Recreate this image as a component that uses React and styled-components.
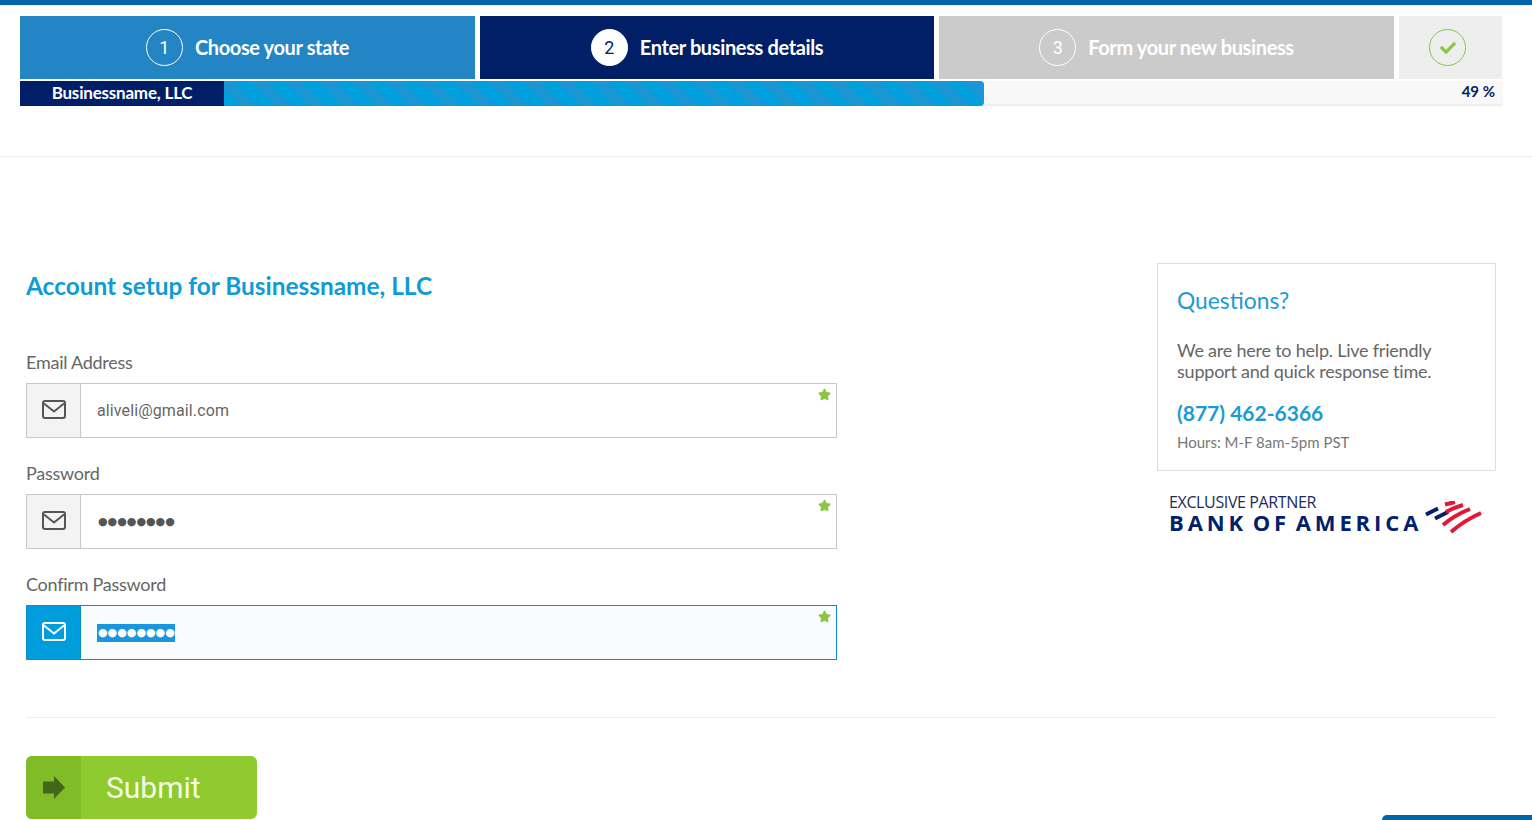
import React from 'react';
import styled, { createGlobalStyle } from 'styled-components';
import { FaStar, FaCheck } from 'react-icons/fa';

const GlobalStyle = createGlobalStyle`
    html, body {
        margin: 0;
        padding: 0;
        background: #fff;
        overflow: hidden;
    }
    body {
        font-family: Lato, "Liberation Sans", sans-serif;
        color: #555;
    }
`;

const Page = styled.div`
    height: 820px;
    border-top: 5px solid #0066a8;
    box-sizing: border-box;
    position: relative;
    overflow: hidden;
`;

const Header = styled.header`
    height: 152px;
    box-sizing: border-box;
    padding: 11px 29px 0 20px;
    border-bottom: 1px solid #eee;
`;

const Steps = styled.div`
    display: grid;
    grid-template-columns: 455px 454px 455px 103px;
    gap: 5px;
`;

const Step = styled.div`
    height: 63px;
    display: flex;
    align-items: center;
    justify-content: center;
    gap: 12px;
    background: ${p => p.$bg};
    color: #fff;
    font-weight: 700;
    font-size: 20px;
    letter-spacing: -0.37px;
`;

const StepLabel = styled.span`
    margin-top: -2px;
`;

const StepNumber = styled.span`
    width: 37px;
    height: 37px;
    box-sizing: border-box;
    border-radius: 50%;
    border: 1px solid #fff;
    display: flex;
    align-items: center;
    justify-content: center;
    background: ${p => (p.$filled ? '#fff' : 'transparent')};
    color: ${p => (p.$filled ? '#001f66' : '#fff')};
    font-family: Roboto, sans-serif;
    font-weight: 400;
    font-size: 18px;
    letter-spacing: 0;
`;

const DoneCircle = styled.span`
    width: 37px;
    height: 37px;
    box-sizing: border-box;
    margin-right: 6px;
    border-radius: 50%;
    border: 1px solid #8cc63f;
    display: flex;
    align-items: center;
    justify-content: center;
    color: #8cc63f;
    font-size: 16px;
`;

const Progress = styled.div`
    margin-top: 2px;
    height: 25px;
    width: 1483px;
    display: flex;
    background: #f8f8f8;
    border-bottom: 2px solid #eee;
    box-sizing: border-box;
    border-radius: 0 3px 3px 0;
`;

const ProgressLabel = styled.div`
    width: 204px;
    height: 25px;
    padding-bottom: 2px;
    box-sizing: border-box;
    background: #001f66;
    color: #fff;
    font-weight: 700;
    font-size: 17px;
    letter-spacing: -0.2px;
    display: flex;
    align-items: center;
    justify-content: center;
`;

const ProgressFill = styled.div`
    height: 25px;
    border-radius: 0 4px 4px 0;
    background: repeating-linear-gradient(45deg, #00a0de 0 12px, #1a96d3 12px 24px);
`;

const Percent = styled.span`
    margin-left: auto;
    margin-right: 8px;
    line-height: 21px;
    font-weight: 700;
    font-size: 15px;
    color: #001f66;
`;

const Main = styled.main`
    padding: 106px 36px 0 26px;
`;

const Columns = styled.div`
    display: flex;
    justify-content: space-between;
    align-items: flex-start;
`;

const FormColumn = styled.section`
    width: 811px;
`;

const Title = styled.h1`
    margin: 7px 0 0;
    height: 32px;
    line-height: 31px;
    font-weight: 700;
    font-size: 24.4px;
    color: #0f9bd7;
`;

const Field = styled.div`
    margin-top: ${p => (p.$first ? '50px' : '25px')};
`;

const Label = styled.div`
    height: 31px;
    line-height: 20px;
    font-size: 18px;
    letter-spacing: -0.25px;
    color: #666;
`;

const InputBox = styled.div`
    height: 55px;
    box-sizing: border-box;
    display: flex;
    position: relative;
    border: 1px solid ${p => (p.$focus ? '#0a8fc4' : '#c8c8c8')};
    background: ${p => (p.$focus ? '#f9fcff' : '#fff')};
`;

const IconCell = styled.div`
    width: 54px;
    flex: none;
    margin-right: 16px;
    display: flex;
    align-items: center;
    justify-content: center;
    box-sizing: border-box;
    border-right: 1px solid ${p => (p.$focus ? '#0a8fc4' : '#c8c8c8')};
    background: ${p => (p.$focus ? '#009ddc' : '#f3f3f3')};
    color: ${p => (p.$focus ? '#fff' : '#555')};
`;

const InputText = styled.div`
    display: flex;
    align-items: center;
    font-family: Roboto, sans-serif;
    font-size: 16px;
    letter-spacing: 0.12px;
    color: #666;
`;

const Dots = styled.span`
    height: 18px;
    line-height: 18px;
    padding: 0 0 0 1px;
    font-family: "DejaVu Sans", sans-serif;
    font-size: 11px;
    letter-spacing: 0;
    color: ${p => (p.$selected ? '#fff' : '#555')};
    background: ${p => (p.$selected ? '#1a96dc' : 'transparent')};
`;

const Required = styled.span`
    position: absolute;
    top: 4px;
    right: 5px;
    color: #8cc63f;
    font-size: 13px;
    line-height: 13px;
`;

const Aside = styled.aside`
    width: 339px;
`;

const HelpCard = styled.div`
    height: 208px;
    box-sizing: border-box;
    border: 1px solid #ddd;
    padding: 22px 19px 0;
`;

const HelpTitle = styled.h2`
    margin: 0;
    font-weight: 400;
    font-size: 22.8px;
    line-height: 28px;
    color: #1c9bd2;
`;

const HelpText = styled.p`
    margin: 26px 0 0;
    font-size: 18px;
    line-height: 21px;
    letter-spacing: -0.22px;
    color: #666;
`;

const Phone = styled.div`
    margin-top: 18px;
    font-size: 21px;
    line-height: 26px;
    font-weight: 700;
    color: #1c9bd2;
`;

const Hours = styled.div`
    margin-top: 6px;
    font-size: 15px;
    line-height: 20px;
    color: #777;
`;

const Partner = styled.div`
    margin: 23px 13px 0 12px;
    display: flex;
    justify-content: space-between;
    align-items: flex-start;
`;

const PartnerSmall = styled.div`
    font-family: "Open Sans", sans-serif;
    font-size: 16px;
    line-height: 16px;
    letter-spacing: -0.37px;
    color: #1b2a5c;
`;

const PartnerName = styled.div`
    font-family: "Open Sans", sans-serif;
    font-weight: 700;
    font-size: 22px;
    line-height: 25px;
    letter-spacing: 3.9px;
    word-spacing: -4px;
    white-space: nowrap;
    color: #012169;
`;

const Rule = styled.hr`
    margin: 57px 0 38px;
    border: 0;
    border-top: 1px solid #eee;
`;

const SubmitButton = styled.button`
    width: 231px;
    height: 63px;
    padding: 0;
    border: 0;
    border-radius: 6px;
    overflow: hidden;
    display: flex;
    align-items: stretch;
    background: #8fcb2f;
    color: #f4fbe6;
    font-family: Roboto, sans-serif;
    font-size: 30px;
    text-align: left;
`;

const ArrowCell = styled.span`
    width: 55px;
    margin-right: 25px;
    display: flex;
    align-items: center;
    justify-content: center;
    background: #80bc28;
`;

const ButtonLabel = styled.span`
    align-self: center;
`;

const ChatTab = styled.div`
    position: absolute;
    right: 0;
    bottom: 0;
    width: 150px;
    height: 5px;
    background: #0066a8;
    border-radius: 6px 0 0 0;
`;

const MailIcon = () => (
    <svg width="24" height="19" viewBox="0 0 24 19" fill="none" stroke="currentColor" strokeWidth="2" style={{ marginBottom: 2 }}>
        <rect x="1" y="1" width="22" height="17" rx="2" />
        <path d="M2 3.5 L12 11.5 L22 3.5" />
    </svg>
);

const FlagLogo = () => (
    <svg width="58" height="33" viewBox="0 0 58 33" fill="none" strokeWidth="4" style={{ marginTop: 7 }}>
        <g stroke="#012169">
            <path d="M1 13.5 L13 7.5" />
            <path d="M10 17.5 L23 11" />
        </g>
        <g stroke="#e31837">
            <path d="M20 3.5 L30 1" />
            <path d="M21 11 Q28 7 38 4" />
            <path d="M18 24 Q30 14 45 8" />
            <path d="M26 31 Q40 19 56 12" />
        </g>
    </svg>
);

const fields = [
    { label: 'Email Address', value: 'aliveli@gmail.com' },
    { label: 'Password', dots: true },
    { label: 'Confirm Password', dots: true, focus: true },
];

export default function App() {
    return (
        <Page>
            <GlobalStyle />
            <Header>
                <Steps>
                    <Step $bg="#2385c4"><StepNumber>1</StepNumber><StepLabel>Choose your state</StepLabel></Step>
                    <Step $bg="#001f66"><StepNumber $filled>2</StepNumber><StepLabel>Enter business details</StepLabel></Step>
                    <Step $bg="#cbcbcb"><StepNumber>3</StepNumber><StepLabel>Form your new business</StepLabel></Step>
                    <Step $bg="#eeeeee"><DoneCircle><FaCheck /></DoneCircle></Step>
                </Steps>
                <Progress>
                    <ProgressLabel>Businessname, LLC</ProgressLabel>
                    <ProgressFill style={{ width: 760 }} />
                    <Percent>49 %</Percent>
                </Progress>
            </Header>
            <Main>
                <Columns>
                    <FormColumn>
                        <Title>Account setup for Businessname, LLC</Title>
                        {fields.map((f, i) => (
                            <Field key={f.label} $first={i === 0}>
                                <Label>{f.label}</Label>
                                <InputBox $focus={f.focus}>
                                    <IconCell $focus={f.focus}><MailIcon /></IconCell>
                                    <InputText>
                                        {f.dots ? <Dots $selected={f.focus}>●●●●●●●●</Dots> : f.value}
                                    </InputText>
                                    <Required><FaStar /></Required>
                                </InputBox>
                            </Field>
                        ))}
                    </FormColumn>
                    <Aside>
                        <HelpCard>
                            <HelpTitle>Questions?</HelpTitle>
                            <HelpText>We are here to help. Live friendly support and quick response time.</HelpText>
                            <Phone>(877) 462-6366</Phone>
                            <Hours>Hours: M-F 8am-5pm PST</Hours>
                        </HelpCard>
                        <Partner>
                            <div>
                                <PartnerSmall>EXCLUSIVE PARTNER</PartnerSmall>
                                <PartnerName>BANK OF AMERICA</PartnerName>
                            </div>
                            <FlagLogo />
                        </Partner>
                    </Aside>
                </Columns>
                <Rule />
                <SubmitButton>
                    <ArrowCell>
                        <svg width="22" height="23" viewBox="0 0 22 23">
                            <path d="M0 5.5 H11 V0 L22 11.5 L11 23 V17.5 H0 Z" fill="#44661a" />
                        </svg>
                    </ArrowCell>
                    <ButtonLabel>Submit</ButtonLabel>
                </SubmitButton>
            </Main>
            <ChatTab />
        </Page>
    );
}
